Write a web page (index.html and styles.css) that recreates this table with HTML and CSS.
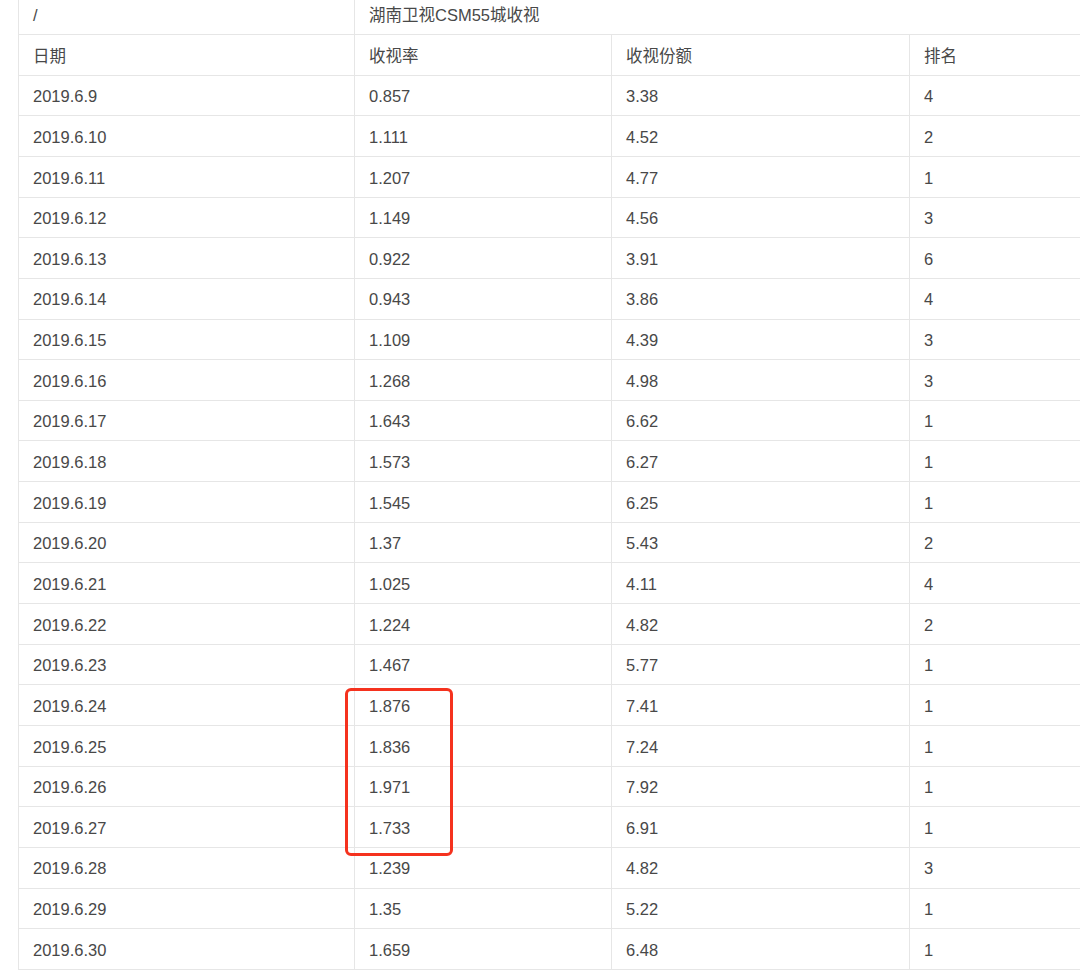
FILE: index.html
```html
<!DOCTYPE html>
<html lang="zh">
<head>
<meta charset="utf-8">
<link rel="stylesheet" href="styles.css">
</head>
<body>
<div class="wrap">
<table class="grid">
<colgroup><col class="c1"><col class="c2"><col class="c3"><col class="c4"></colgroup>
<tr class="top"><td>/</td><td colspan="3">湖南卫视CSM55城收视</td></tr>
<tr><td>日期</td><td>收视率</td><td>收视份额</td><td>排名</td></tr>
<tr><td>2019.6.9</td><td>0.857</td><td>3.38</td><td>4</td></tr>
<tr><td>2019.6.10</td><td>1.111</td><td>4.52</td><td>2</td></tr>
<tr><td>2019.6.11</td><td>1.207</td><td>4.77</td><td>1</td></tr>
<tr><td>2019.6.12</td><td>1.149</td><td>4.56</td><td>3</td></tr>
<tr><td>2019.6.13</td><td>0.922</td><td>3.91</td><td>6</td></tr>
<tr><td>2019.6.14</td><td>0.943</td><td>3.86</td><td>4</td></tr>
<tr><td>2019.6.15</td><td>1.109</td><td>4.39</td><td>3</td></tr>
<tr><td>2019.6.16</td><td>1.268</td><td>4.98</td><td>3</td></tr>
<tr><td>2019.6.17</td><td>1.643</td><td>6.62</td><td>1</td></tr>
<tr><td>2019.6.18</td><td>1.573</td><td>6.27</td><td>1</td></tr>
<tr><td>2019.6.19</td><td>1.545</td><td>6.25</td><td>1</td></tr>
<tr><td>2019.6.20</td><td>1.37</td><td>5.43</td><td>2</td></tr>
<tr><td>2019.6.21</td><td>1.025</td><td>4.11</td><td>4</td></tr>
<tr><td>2019.6.22</td><td>1.224</td><td>4.82</td><td>2</td></tr>
<tr><td>2019.6.23</td><td>1.467</td><td>5.77</td><td>1</td></tr>
<tr><td>2019.6.24</td><td>1.876</td><td>7.41</td><td>1</td></tr>
<tr><td>2019.6.25</td><td>1.836</td><td>7.24</td><td>1</td></tr>
<tr><td>2019.6.26</td><td>1.971</td><td>7.92</td><td>1</td></tr>
<tr><td>2019.6.27</td><td>1.733</td><td>6.91</td><td>1</td></tr>
<tr><td>2019.6.28</td><td>1.239</td><td>4.82</td><td>3</td></tr>
<tr><td>2019.6.29</td><td>1.35</td><td>5.22</td><td>1</td></tr>
<tr><td>2019.6.30</td><td>1.659</td><td>6.48</td><td>1</td></tr>
</table>
<div class="mark"></div>
</div>
</body>
</html>
```
FILE: styles.css
```css
html, body {
  margin: 0;
  padding: 0;
  background: #ffffff;
  overflow: hidden;
}
body {
  font-family: "Liberation Sans", "Noto Sans CJK SC", sans-serif;
  font-size: 16.5px;
  color: #484848;
}
.wrap {
  position: relative;
  width: 1080px;
  height: 971px;
  overflow: hidden;
}
.grid {
  border-collapse: collapse;
  table-layout: fixed;
  width: 1100px;
  margin-left: 18px;
  margin-top: -5.6px;
}
.c1 { width: 336px; }
.c2 { width: 257px; }
.c3 { width: 298px; }
.c4 { width: 209px; }
.grid td {
  border: 1px solid #e6e6e6;
  height: 37.65px;
  padding: 2px 0 0 14px;
  vertical-align: middle;
  white-space: nowrap;
  line-height: 1;
}
.grid tr.top td {
  border-top: none;
}
.mark {
  position: absolute;
  left: 345px;
  top: 688px;
  width: 102px;
  height: 162px;
  border: 3px solid #f5321e;
  border-radius: 6px;
}
```
